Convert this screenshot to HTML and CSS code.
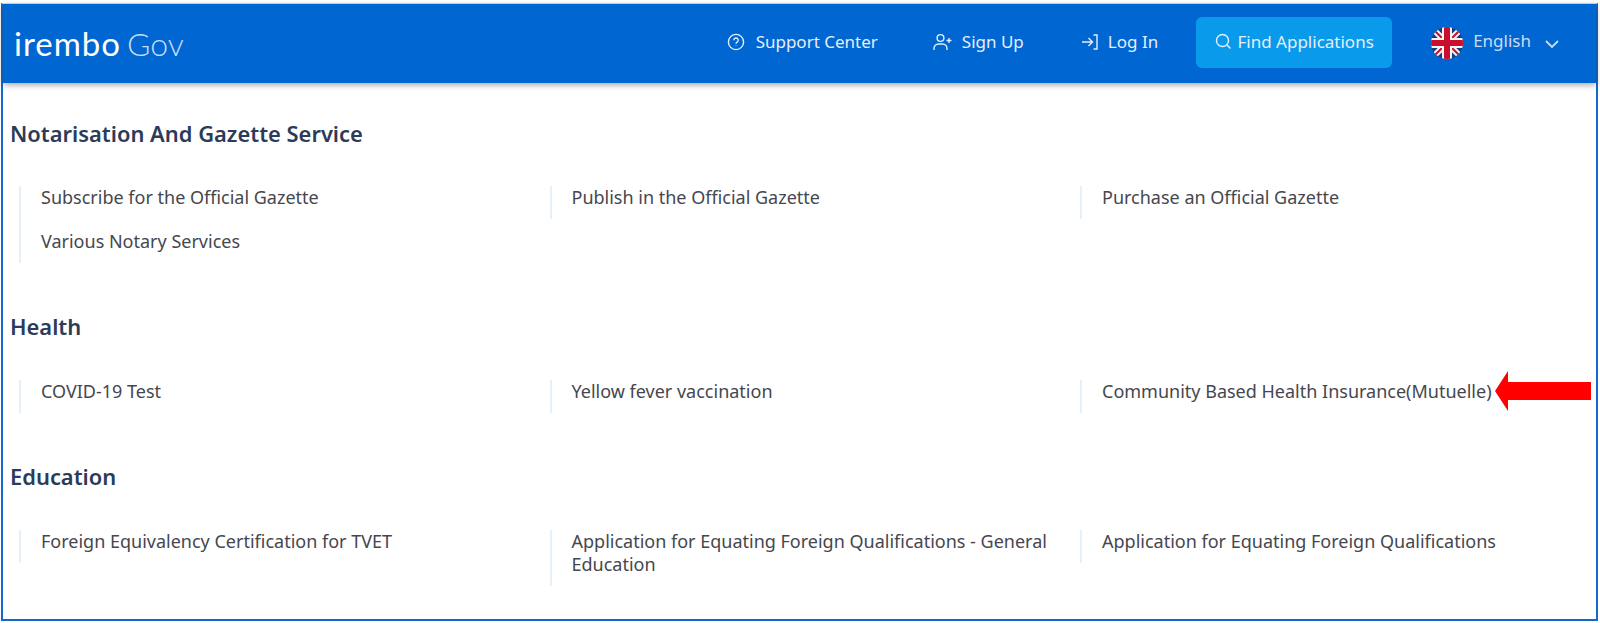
FILE: index.html
```html
<!DOCTYPE html>
<html lang="en">
<head>
    <meta charset="UTF-8">
    <title>Irembo Gov - Services</title>
    <link rel="stylesheet" href="styles.css">
</head>
<body>
    <div class="frame">
        <header class="app-header">
            <a class="logo"><span class="logo-name">irembo</span><span class="logo-gov">Gov</span></a>
            <nav class="nav">
                <a class="nav-link support">
                    <svg class="icon" width="18" height="18" viewBox="0 0 18 18"><circle cx="9" cy="9" r="7.600"/><path d="M6.800 7.200a2.200 2.200 0 1 1 3.300 1.900c-.7.400-1.100.800-1.100 1.600"/><path d="M9 12.600v.4"/></svg>
                    Support Center
                </a>
                <a class="nav-link signup">
                    <svg class="icon" width="20" height="18" viewBox="0 0 20 18"><circle cx="7.500" cy="5" r="3.400"/><path d="M1 17v-1.500A4.500 4.500 0 0 1 5.500 11h4a4.500 4.500 0 0 1 4.500 4.500V17"/><path d="M16 5v5M13.500 7.500h5"/></svg>
                    Sign Up
                </a>
                <a class="nav-link login">
                    <svg class="icon" width="18" height="18" viewBox="0 0 18 18"><path d="M1 9h10M7.500 5l4 4-4 4"/><path d="M12.500 2H16v14h-3.500"/></svg>
                    Log In
                </a>
                <a class="find-btn">
                    <svg class="icon" width="17" height="17" viewBox="0 0 17 17"><circle cx="7.500" cy="7.500" r="6"/><path d="M12 12l3.500 3.500"/></svg>
                    Find Applications
                </a>
                <a class="lang">
                    <svg class="flag" width="32" height="32" viewBox="0 0 32 32">
                        <clipPath id="flag-clip"><circle cx="16" cy="16" r="16"/></clipPath>
                        <g clip-path="url(#flag-clip)">
                            <rect width="32" height="32" fill="#1b3a7a"/>
                            <path d="M0 0L32 32M32 0L0 32" stroke="#f4f4f4" stroke-width="6"/>
                            <path d="M0 0L32 32M32 0L0 32" stroke="#c8102e" stroke-width="2"/>
                            <rect x="11" width="10" height="32" fill="#f4f4f4"/>
                            <rect y="11" width="32" height="10" fill="#f4f4f4"/>
                            <rect x="13" width="6" height="32" fill="#c8102e"/>
                            <rect y="13" width="32" height="6" fill="#c8102e"/>
                        </g>
                    </svg>
                    <span class="lang-name">English</span>
                    <svg class="icon chevron" width="14" height="8" viewBox="0 0 14 8"><path d="M1 1l6 6 6-6"/></svg>
                </a>
            </nav>
        </header>

        <main class="content">
            <section class="service-group notarisation">
                <h2>Notarisation And Gazette Service</h2>
                <div class="service-grid">
                    <ul class="service-col">
                        <li>Subscribe for the Official Gazette</li>
                        <li>Various Notary Services</li>
                    </ul>
                    <ul class="service-col">
                        <li>Publish in the Official Gazette</li>
                    </ul>
                    <ul class="service-col">
                        <li>Purchase an Official Gazette</li>
                    </ul>
                </div>
            </section>

            <section class="service-group health">
                <h2>Health</h2>
                <div class="service-grid">
                    <ul class="service-col">
                        <li>COVID-19 Test</li>
                    </ul>
                    <ul class="service-col">
                        <li>Yellow fever vaccination</li>
                    </ul>
                    <ul class="service-col">
                        <li>Community Based Health Insurance(Mutuelle)</li>
                    </ul>
                </div>
            </section>

            <section class="service-group education">
                <h2>Education</h2>
                <div class="service-grid">
                    <ul class="service-col">
                        <li>Foreign Equivalency Certification for TVET</li>
                    </ul>
                    <ul class="service-col">
                        <li>Application for Equating Foreign Qualifications - General Education</li>
                    </ul>
                    <ul class="service-col">
                        <li>Application for Equating Foreign Qualifications</li>
                    </ul>
                </div>
            </section>
        </main>

        <!-- Red annotation arrow pasted over the screenshot -->
        <svg class="annotation-arrow" width="97" height="40" viewBox="0 0 97 40"><path d="M0 20L13 0V11H96V29H13V40Z"/></svg>
    </div>
</body>
</html>
```

FILE: styles.css
```css
* {
    box-sizing: border-box;
    margin: 0;
    padding: 0;
}

html, body {
    height: 623px;
    overflow: hidden;
    background: white;
}

body {
    font-family: 'Noto Sans', 'Open Sans', sans-serif;
    padding: 3px 2px 2px 1px;
    color: #45474f;
}

.frame {
    position: relative;
    height: 618px;
    border: 2px solid #1668cf;
    border-top: 1px solid #cfdeef;
}

.app-header {
    display: flex;
    align-items: center;
    justify-content: space-between;
    height: 79px;
    padding-bottom: 2px;
    background: #0066d1;
    color: #e4effb;
    box-shadow: 0 2px 6px rgba(0,0,0,0.35);
}

.logo {
    display: flex;
    align-items: baseline;
    margin-left: 11px;
    color: white;
    font-family: 'Lato', sans-serif;
}

.logo-name {
    font-size: 33px;
    font-weight: 400;
    letter-spacing: 1px;
}

.logo-gov {
    margin-left: 6px;
    font-size: 32px;
    font-weight: 300;
    color: #c4dcf5;
}

.nav {
    display: flex;
    align-items: center;
    margin-right: 37px;
}

.nav-link {
    display: flex;
    align-items: center;
    gap: 9px;
    font-size: 17px;
    padding-bottom: 2px;
}

.support { margin-right: 55px; gap: 11px; }
.signup { margin-right: 57px; }
.login { margin-right: 38px; }

.icon {
    fill: none;
    stroke: currentColor;
    stroke-width: 1.4;
    flex-shrink: 0;
}

.find-btn {
    display: flex;
    align-items: center;
    justify-content: center;
    gap: 6px;
    width: 196px;
    height: 51px;
    padding-bottom: 2px;
    background: #0a9aeb;
    border-radius: 6px;
    font-size: 17px;
    margin-right: 39px;
}

.lang {
    display: flex;
    align-items: center;
    color: #c9dcf3;
    font-size: 17px;
}

.flag {
    margin-right: 10px;
}

.lang-name {
    margin-right: 14px;
    position: relative;
    top: -2px;
}

.chevron {
    stroke-width: 1.8;
    margin-top: 3px;
}

.content {
    padding: 0 0 0 7px;
}

.service-group h2 {
    font-size: 21.9px;
    font-weight: 600;
    color: #2c3c58;
    line-height: 32px;
    margin-bottom: 36px;
}

.notarisation { padding-top: 35px; }
.health { padding-top: 48px; }
.education { padding-top: 48px; }

.health h2, .education h2 { margin-bottom: 37px; }

.service-grid {
    display: grid;
    grid-template-columns: repeat(3, 530.5px);
    align-items: start;
    padding-left: 9px;
}

.service-col {
    list-style: none;
    display: flex;
    flex-direction: column;
    gap: 21px;
    width: 510px;
    padding: 0 0 10px 20px;
    border-left: 2px solid #e6f0f9;
    font-size: 18px;
    line-height: 23px;
}

.annotation-arrow {
    position: absolute;
    left: 1492px;
    top: 367px;
    fill: #f00;
}
```
